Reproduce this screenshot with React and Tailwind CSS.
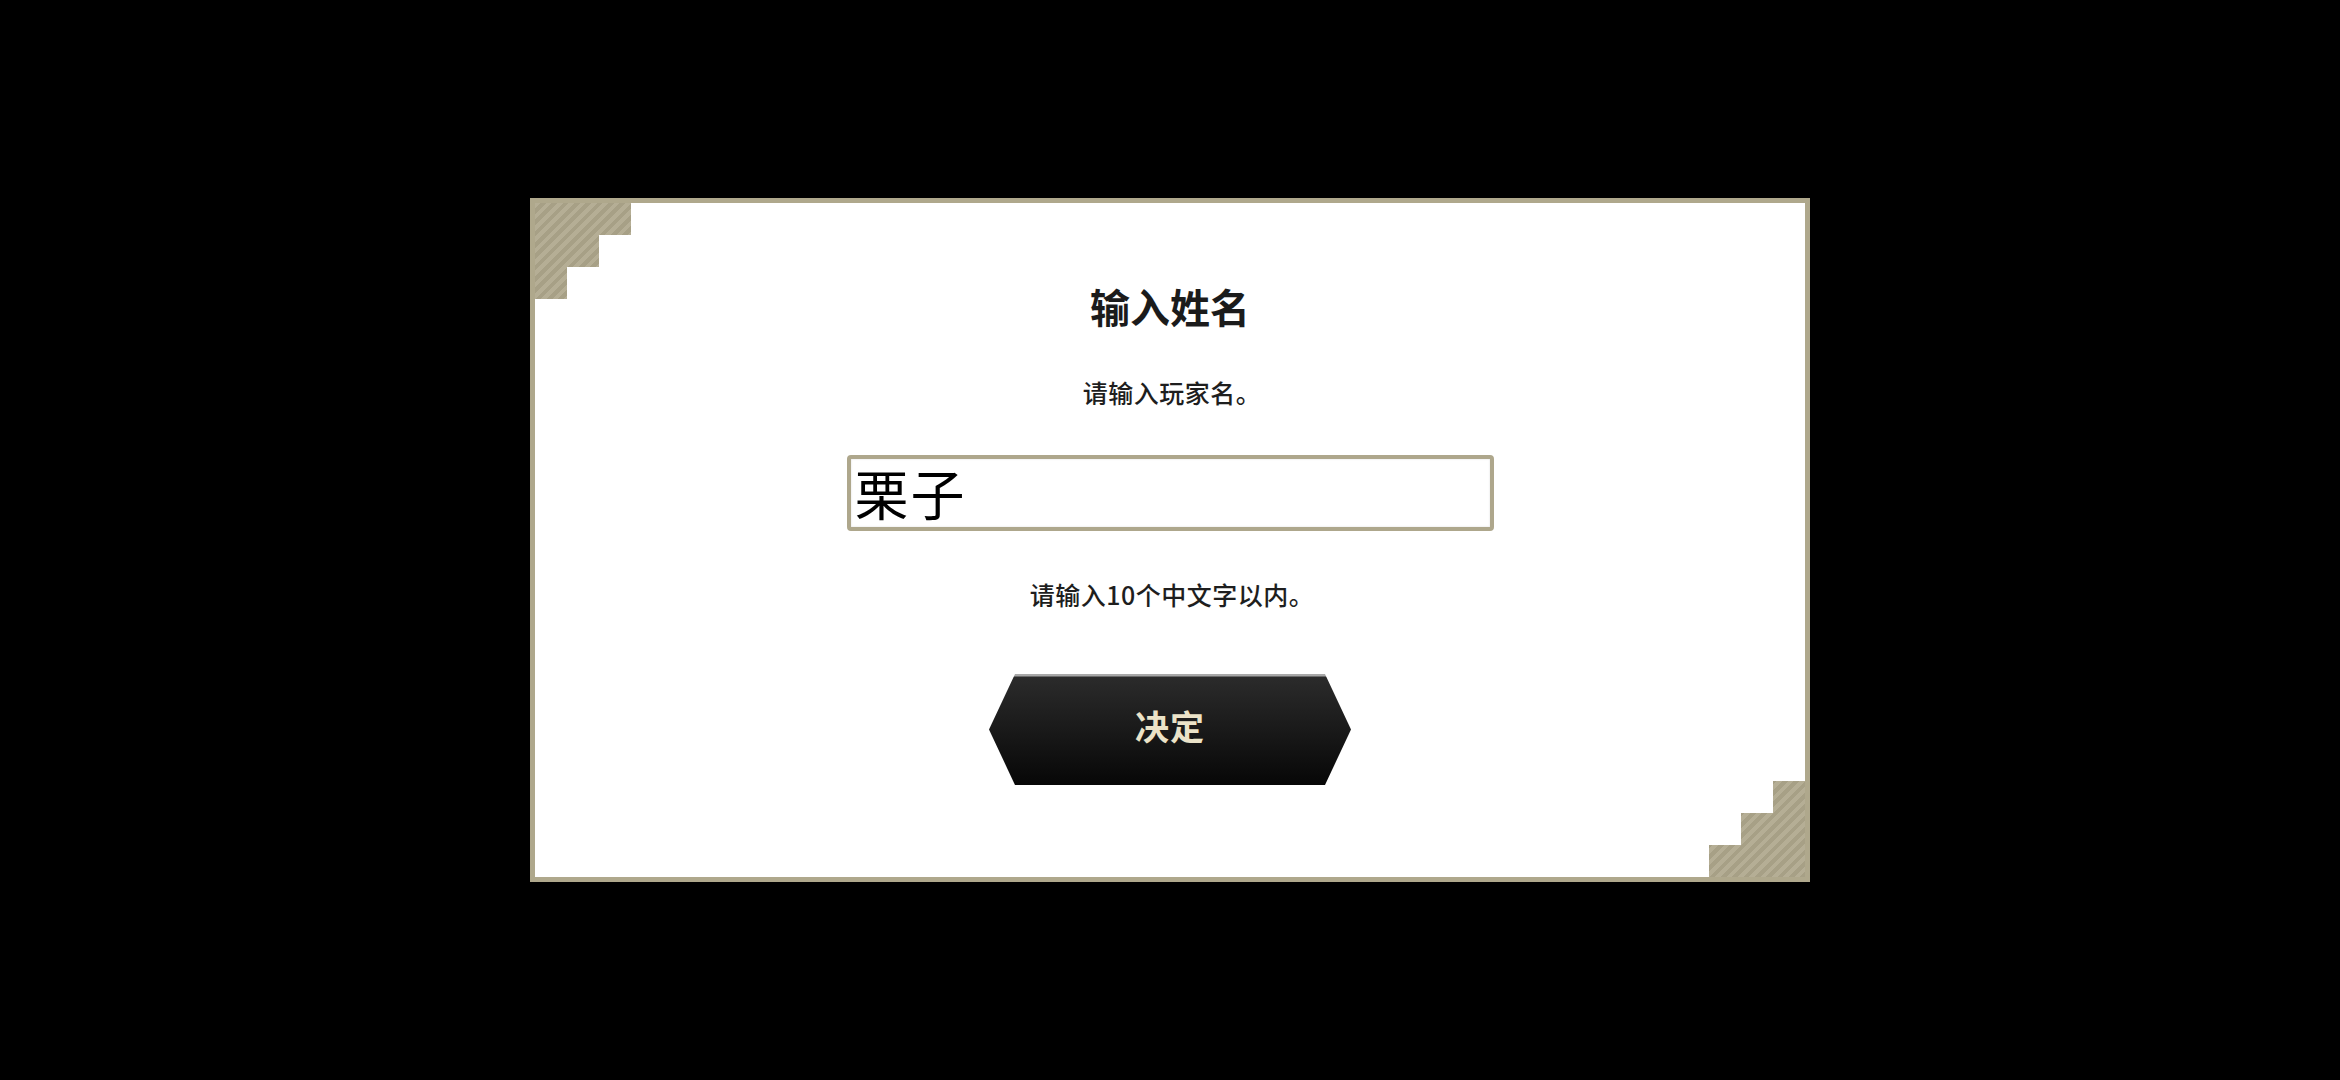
const cjk = { fontFamily: '"Noto Sans CJK SC", "Noto Sans", sans-serif' }

// stepped corner ornament, drawn with a clip-path staircase and diagonal hatching
const StairCorner = ({ flip }) => (
  <div
    className={
      'absolute w-[96px] h-[96px] bg-[repeating-linear-gradient(135deg,#b5ae95_0px,#b5ae95_4px,#a7a086_4px,#a7a086_8px)] ' +
      (flip
        ? 'right-0 bottom-0 [clip-path:polygon(100%_0,100%_100%,0_100%,0_64px,32px_64px,32px_32px,64px_32px,64px_0)]'
        : 'left-0 top-0 [clip-path:polygon(0_0,100%_0,100%_32px,64px_32px,64px_64px,32px_64px,32px_100%,0_100%)]')
    }
  />
)

const NameDialog = () => {
  return (
    <div className="relative w-[1280px] h-[684px] bg-white border-[5px] border-[#afa88c]">
      <StairCorner />
      <StairCorner flip />

      <div className="flex flex-col items-center pt-[83px]" style={cjk}>
        <h1 className="text-[40px] leading-none font-bold text-[#1b1b1b]">输入姓名</h1>

        <p className="mt-[54px] text-[25px] leading-none font-medium text-[#1e1e1e] pl-[4px] tracking-[0.5px]">
          请输入玩家名。
        </p>

        <div className="mt-[50px] w-[647px] h-[76px] border-[4px] border-[#aea78c] rounded-[4px] flex items-center px-[4px] shadow-[inset_0_0_2px_rgba(0,0,0,0.15)]">
          <span className="text-[54px] leading-none text-black tracking-[2px]">栗子</span>
        </div>

        <p className="mt-[51px] text-[25px] leading-none font-medium text-[#1e1e1e] pl-[4px] tracking-[0.5px]">
          请输入10个中文字以内。
        </p>

        <button
          className="mt-[67px] w-[362px] h-[111px] flex items-center justify-center pb-[8px] bg-[linear-gradient(#a8a8a8_0px,#a8a8a8_2px,#2b2b2b_3px,#070707_100%)] [clip-path:polygon(26px_0,calc(100%-26px)_0,100%_50%,calc(100%-26px)_100%,26px_100%,0_50%)]"
        >
          <span className="text-[34px] leading-none font-bold text-[#ebe3c8] tracking-[1px]">决定</span>
        </button>
      </div>
    </div>
  )
}

export default function App() {
  return (
    <div className="w-full h-screen bg-black flex items-center justify-center">
      <NameDialog />
    </div>
  )
}
